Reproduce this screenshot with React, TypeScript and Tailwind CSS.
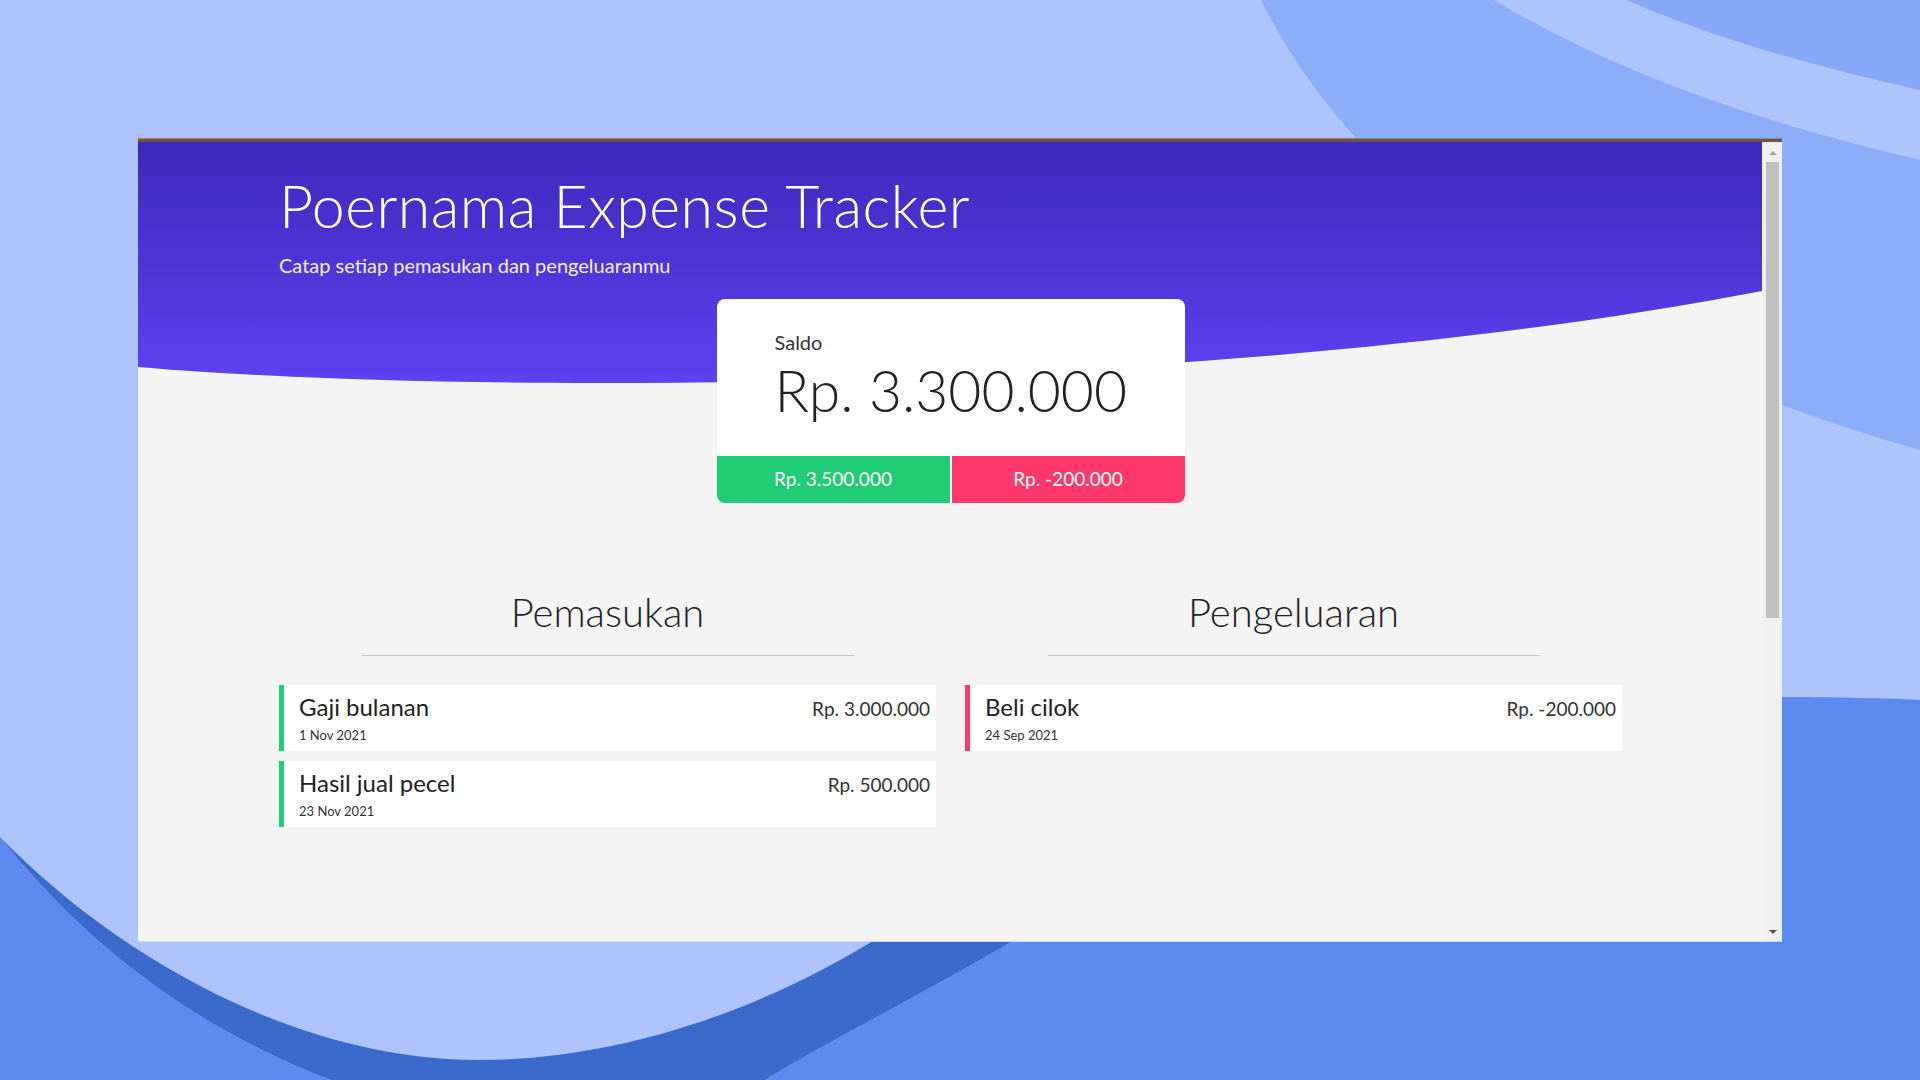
import React from "react";

const pemasukan = [
  { title: "Gaji bulanan", date: "1 Nov 2021", amount: "Rp. 3.000.000" },
  { title: "Hasil jual pecel", date: "23 Nov 2021", amount: "Rp. 500.000" },
];

const pengeluaran = [
  { title: "Beli cilok", date: "24 Sep 2021", amount: "Rp. -200.000" },
];

type Item = { title: string; date: string; amount: string };

const Background = () => (
  <svg
    className="absolute inset-0"
    width="1920"
    height="1080"
    viewBox="0 0 1920 1080"
  >
    <rect width="1920" height="1080" fill="#afc3fd" />
    <path d="M1261,0 C1330,140 1500,330 1920,450 L1920,0 Z" fill="#8dadf8" />
    <path
      d="M1494,0 Q1660,100 1920,160 L1920,90 Q1740,50 1627,0 Z"
      fill="#afc3fd"
    />
    <path d="M1627,0 Q1740,50 1920,90 L1920,0 Z" fill="#88a7f6" />
    <path d="M0,837 C90,950 200,1030 331,1080 L0,1080 Z" fill="#5b8bf0" />
    <path
      d="M765,1080 C830,1040 930,990 1011,942 L1100,870 L1100,697 L1782,697 C1850,697 1900,699 1920,700 L1920,1080 Z"
      fill="#5b8bf0"
    />
    <path
      d="M0,837 C90,950 200,1030 331,1080 L765,1080 C830,1040 930,990 1011,942 L1100,870 L1000,860 L873,941 C760,1010 620,1060 478,1060 C300,1060 120,960 0,837 Z"
      fill="#3a6bcc"
    />
  </svg>
);

const EntryList = ({
  heading,
  items,
  accent,
}: {
  heading: string;
  items: Item[];
  accent: string;
}) => (
  <div>
    <h2 className="text-center text-[40px] leading-none font-light text-[#222]">
      {heading}
    </h2>
    <div className="mx-auto mt-[23px] h-px w-[492px] bg-[#c4c4c4]" />
    <div className="mt-[29px] flex flex-col gap-[10px]">
      {items.map((item) => (
        <div
          key={item.title}
          className={`flex h-[66px] items-start justify-between border-l-[5px] bg-white pr-[6px] pl-[15px] pt-[10px] ${accent}`}
        >
          <div>
            <p className="text-[24px] leading-none text-[#222]">{item.title}</p>
            <p className="mt-[10px] text-[13px] leading-none text-[#333]">
              {item.date}
            </p>
          </div>
          <p className="mt-[4px] text-[19px] leading-none text-[#333]">
            {item.amount}
          </p>
        </div>
      ))}
    </div>
  </div>
);

export default function App() {
  return (
    <div className="relative h-[1080px] w-[1920px] overflow-hidden font-['Lato',sans-serif]">
      <Background />
      <div className="relative pt-[138px] pl-[138px]">
        <div className="flex h-[804px] w-[1644px] flex-col border-b border-[#cfd8f3]">
          <div className="h-[4px] border-t border-[#8a8a8a] bg-[#74524a]" />
          <div className="flex min-h-0 flex-1">
            {/* page content */}
            <div className="relative flex-1 overflow-hidden bg-[#f4f4f4]">
              <svg
                className="absolute top-0 left-0"
                width="1624"
                height="260"
                viewBox="0 0 1624 260"
              >
                <defs>
                  <linearGradient id="hdr" x1="0" y1="0" x2="0" y2="1">
                    <stop offset="0" stopColor="#3f28bc" />
                    <stop offset="1" stopColor="#5e41f0" />
                  </linearGradient>
                </defs>
                <path
                  d="M0,0 L1624,0 L1624,149 C1100,250 350,255 0,225 Z"
                  fill="url(#hdr)"
                />
              </svg>

              <div className="relative px-[141px] pt-[34px]">
                <h1 className="text-[59px] leading-none font-light tracking-[0.5px] text-white">
                  Poernama Expense Tracker
                </h1>
                <p className="mt-[20px] text-[20px] leading-none text-[#f2f0ff]">
                  Catap setiap pemasukan dan pengeluaranmu
                </p>

                <div className="mx-auto mt-[24px] w-[468px] overflow-hidden rounded-[8px] bg-white">
                  <div className="px-[58px] pt-[33px]">
                    <p className="text-[20px] leading-none text-[#333]">Saldo</p>
                    <p className="mt-[10px] text-[57px] leading-none font-light whitespace-nowrap text-[#222]">
                      Rp. 3.300.000
                    </p>
                  </div>
                  <div className="mt-[37px] grid h-[47px] grid-cols-2 gap-[2px]">
                    <div className="flex items-center justify-center bg-[#20cc74] text-[19px] text-white">
                      Rp. 3.500.000
                    </div>
                    <div className="flex items-center justify-center bg-[#ff386c] text-[19px] text-white">
                      Rp. -200.000
                    </div>
                  </div>
                </div>

                <div className="mt-[89px] grid grid-cols-2 gap-[29px]">
                  <EntryList
                    heading="Pemasukan"
                    items={pemasukan}
                    accent="border-[#20cc74]"
                  />
                  <EntryList
                    heading="Pengeluaran"
                    items={pengeluaran}
                    accent="border-[#ff386c]"
                  />
                </div>
              </div>
            </div>

            {/* scrollbar */}
            <div className="flex w-[19px] flex-col items-center bg-[#f0f0f0]">
              <div className="mt-[9px] h-0 w-0 border-x-[4px] border-b-[4px] border-x-transparent border-b-[#a3a3a3]" />
              <div className="mt-[7px] h-[456px] w-[13px] bg-[#c1c1c1]" />
              <div className="mt-auto mb-[7px] h-0 w-0 border-x-[4px] border-t-[4px] border-x-transparent border-t-[#505050]" />
            </div>
          </div>
        </div>
      </div>
    </div>
  );
}
